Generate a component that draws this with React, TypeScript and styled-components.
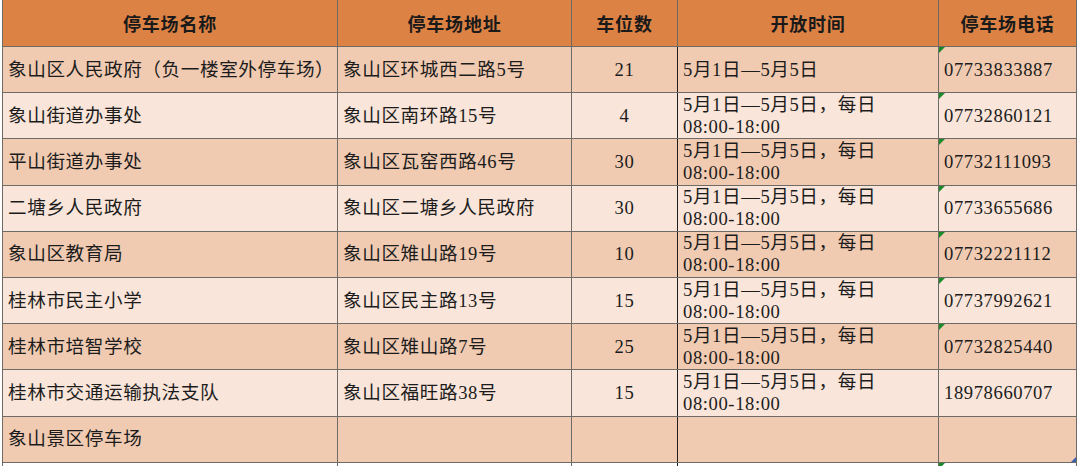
import React from 'react'
import styled, { createGlobalStyle } from 'styled-components'

const Global = createGlobalStyle`
    html, body {
        margin: 0;
        padding: 0;
        background: #fff;
        overflow: hidden;
    }
    body {
        font-family: "Liberation Serif", "Noto Sans CJK SC", serif;
        color: #1c1c1c;
    }
`

type Lot = {
    name: string
    addr: string
    spots: string
    time: string[]
    phone: string
    flag?: boolean
}

const lots: Lot[] = [
    { name: '象山区人民政府（负一楼室外停车场）', addr: '象山区环城西二路5号', spots: '21', time: ['5月1日—5月5日'], phone: '07733833887', flag: true },
    { name: '象山街道办事处', addr: '象山区南环路15号', spots: '4', time: ['5月1日—5月5日，每日', '08:00-18:00'], phone: '07732860121', flag: true },
    { name: '平山街道办事处', addr: '象山区瓦窑西路46号', spots: '30', time: ['5月1日—5月5日，每日', '08:00-18:00'], phone: '07732111093', flag: true },
    { name: '二塘乡人民政府', addr: '象山区二塘乡人民政府', spots: '30', time: ['5月1日—5月5日，每日', '08:00-18:00'], phone: '07733655686', flag: true },
    { name: '象山区教育局', addr: '象山区雉山路19号', spots: '10', time: ['5月1日—5月5日，每日', '08:00-18:00'], phone: '07732221112', flag: true },
    { name: '桂林市民主小学', addr: '象山区民主路13号', spots: '15', time: ['5月1日—5月5日，每日', '08:00-18:00'], phone: '07737992621', flag: true },
    { name: '桂林市培智学校', addr: '象山区雉山路7号', spots: '25', time: ['5月1日—5月5日，每日', '08:00-18:00'], phone: '07732825440', flag: true },
    { name: '桂林市交通运输执法支队', addr: '象山区福旺路38号', spots: '15', time: ['5月1日—5月5日，每日', '08:00-18:00'], phone: '18978660707' },
    { name: '象山景区停车场', addr: '', spots: '', time: [], phone: '' },
]

const App = () => {
    return (
        <Page>
            <Global />
            <Sheet>
                <colgroup>
                    <col style={{ width: 335 }} />
                    <col style={{ width: 234 }} />
                    <col style={{ width: 106 }} />
                    <col style={{ width: 261 }} />
                    <col style={{ width: 138 }} />
                </colgroup>
                <thead>
                    <HeadRow>
                        <HeadCell>停车场名称</HeadCell>
                        <HeadCell>停车场地址</HeadCell>
                        <HeadCell $dark>车位数</HeadCell>
                        <HeadCell>开放时间</HeadCell>
                        <HeadCell>停车场电话</HeadCell>
                    </HeadRow>
                </thead>
                <tbody>
                    {lots.map((lot, i) => (
                        <Row key={lot.name} $tone={i % 2 === 0 ? 'dark' : 'light'}>
                            <Cell>{lot.name}</Cell>
                            <Cell>{lot.addr}</Cell>
                            <Cell $center $dark>{lot.spots}</Cell>
                            <Cell $tight>
                                {lot.time.map((t) => (
                                    <Line key={t}>{t}</Line>
                                ))}
                            </Cell>
                            <Cell $flag={lot.flag} $corner={i === lots.length - 1}>{lot.phone}</Cell>
                        </Row>
                    ))}
                    <Row $tone="blank">
                        <Cell />
                        <Cell />
                        <Cell $dark />
                        <Cell />
                        <Cell $flag />
                    </Row>
                </tbody>
            </Sheet>
        </Page>
    )
}

export default App

const Page = styled.div`
    width: 1080px;
    height: 466px;
    overflow: hidden;
    padding-left: 2px;
    box-sizing: border-box;
`

const Sheet = styled.table`
    border-collapse: collapse;
    table-layout: fixed;
    width: 1075px;
    margin-top: -1px;
`

const HeadRow = styled.tr`
    height: 47px;
    background: #dd8245;
`

const HeadCell = styled.th<{ $dark?: boolean }>`
    border: 1px solid #6e6a66;
    border-left-color: ${(p) => (p.$dark ? '#1e1e1e' : '#6e6a66')};
    font-family: "Noto Sans CJK SC", sans-serif;
    font-size: 18px;
    font-weight: 700;
    letter-spacing: 0.8px;
    color: #1a1a1a;
    text-align: center;
    vertical-align: middle;
    padding: 0;
`

const tones = {
    dark: '#f0cbb2',
    light: '#f9e5d9',
    blank: '#ffffff',
}

const Row = styled.tr<{ $tone: 'dark' | 'light' | 'blank' }>`
    height: ${(p) => (p.$tone === 'blank' ? '20px' : '46.2px')};
    background: ${(p) => tones[p.$tone]};
`

const Cell = styled.td<{ $center?: boolean; $dark?: boolean; $tight?: boolean; $flag?: boolean; $corner?: boolean }>`
    position: relative;
    border: 1px solid #6e6a66;
    border-left-color: ${(p) => (p.$dark ? '#1e1e1e' : '#6e6a66')};
    border-right-color: ${(p) => (p.$dark ? '#1e1e1e' : '#6e6a66')};
    font-size: 18.6px;
    letter-spacing: 0.6px;
    line-height: ${(p) => (p.$tight ? '22px' : '24px')};
    text-align: ${(p) => (p.$center ? 'center' : 'left')};
    vertical-align: middle;
    padding: 0 0 0 ${(p) => (p.$center ? '0' : '5px')};
    white-space: nowrap;
    &::before {
        content: '';
        display: ${(p) => (p.$flag ? 'block' : 'none')};
        position: absolute;
        left: 0;
        top: 0;
        border-top: 6px solid #1d8a2a;
        border-right: 6px solid transparent;
    }
    &::after {
        content: '';
        display: ${(p) => (p.$corner ? 'block' : 'none')};
        position: absolute;
        right: 0;
        bottom: 0;
        border-bottom: 5px solid #3f5fb0;
        border-left: 5px solid transparent;
    }
`

const Line = styled.div`
    display: block;
`
